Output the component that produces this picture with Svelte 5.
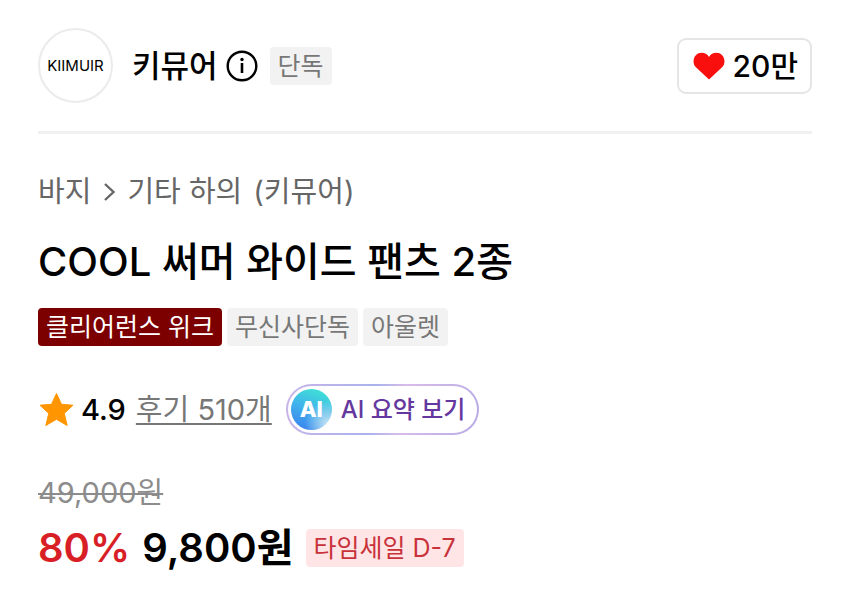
<script>
  const brand = { name: '키뮤어', logo: 'KIIMUIR', likes: '20만' };
  const tags = [
    { label: '클리어런스 위크', kind: 'clearance' },
    { label: '무신사단독', kind: 'plain' },
    { label: '아울렛', kind: 'plain' }
  ];
</script>

<main class="product">
  <header class="brand">
    <a class="logo" href="#brand">{brand.logo}</a>
    <a class="name" href="#brand">{brand.name}</a>
    <button class="info" type="button" aria-label="브랜드 정보">
      <svg width="32" height="32" viewBox="0 0 32 32" fill="none" stroke="#000">
        <circle cx="16" cy="16" r="14.300" stroke-width="2.4" />
        <path d="M16 13v10" stroke-width="2.6" />
        <circle cx="16" cy="9.500" r="1.700" fill="#000" stroke="none" />
      </svg>
    </button>
    <span class="tag plain">단독</span>
    <button class="like" type="button">
      <svg width="32" height="28" viewBox="0 0 32 28" fill="#fa0f0f" aria-hidden="true">
        <path d="M16 27.5 3.2 15.6C.9 13.4.4 11 .6 8.4 1 4 4.300.8 8.500.8c3.200 0 5.900 1.500 7.500 4.100C17.600 2.300 20.300.8 23.500.8c4.200 0 7.500 3.200 7.900 7.600.2 2.600-.3 5-2.600 7.200Z" />
      </svg>
      <span>{brand.likes}</span>
    </button>
  </header>

  <nav class="crumbs" aria-label="카테고리">
    <a href="#pants">바지</a>
    <svg width="14" height="20" viewBox="0 0 14 20" fill="none" stroke="#666" stroke-width="2.4" aria-hidden="true">
      <path d="m3 2 8.500 8L3 18" />
    </svg>
    <a href="#etc">기타 하의</a>
    <a href="#brand">({brand.name})</a>
  </nav>

  <h1>COOL 써머 와이드 팬츠 2종</h1>

  <div class="tags">
    {#each tags as tag}
      <span class="tag {tag.kind}">{tag.label}</span>
    {/each}
  </div>

  <div class="reviews">
    <svg width="36" height="36" viewBox="0 0 36 36" fill="#ff9500" aria-hidden="true">
      <path stroke="#ff9500" stroke-width="1" stroke-linejoin="round" d="m18.500 1.500 5 10.800 11.500.9-8.800 8.200 3 12.100-10.700-6.200-10.700 6.200 3-12.100L2 13.200l11.500-.9Z" />
    </svg>
    <span class="score">4.9</span>
    <a class="count" href="#reviews">후기 510개</a>
    <button class="ai" type="button">
      <span class="orb" aria-hidden="true">AI</span>
      <span>AI 요약 보기</span>
    </button>
  </div>

  <div class="price">
    <del>49,000원</del>
    <div class="sale">
      <strong class="rate">80%</strong>
      <strong>9,800원</strong>
      <span class="tag time">타임세일 D-7</span>
    </div>
  </div>
</main>

<style>
  :global(body) {
    margin: 0;
    background: #fff;
  }
  .product {
    padding: 28px 38px;
    color: #000;
    font-family: Inter, 'Noto Sans CJK KR', sans-serif;
  }
  a {
    color: inherit;
    text-decoration: none;
  }
  button {
    padding: 0;
    border: 0;
    background: none;
    color: inherit;
    font: inherit;
    cursor: pointer;
  }
  svg {
    display: block;
    flex: none;
  }
  .brand {
    display: flex;
    align-items: center;
    padding-bottom: 28px;
    border-bottom: 3px solid #f0f0f0;
  }
  .logo {
    box-sizing: border-box;
    width: 75px;
    height: 75px;
    border: 2px solid #ebebeb;
    border-radius: 50%;
    text-align: center;
    font-size: 15px;
    line-height: 72px;
  }
  .name {
    margin: 0 8px 0 19px;
    font-size: 31px;
    font-weight: 500;
    line-height: 40px;
  }
  .info {
    margin-right: 12px;
  }
  .like {
    display: flex;
    align-items: center;
    gap: 8px;
    margin-left: auto;
    padding: 6px 12px 6px 14px;
    border: 2px solid #e5e5e5;
    border-radius: 9px;
    font-size: 30px;
    font-weight: 500;
    line-height: 40px;
  }
  .tag {
    padding: 0 8px;
    border-radius: 4px;
    font-size: 25px;
    line-height: 38px;
    white-space: nowrap;
  }
  .plain {
    background: #f2f2f2;
    color: #777;
  }
  .clearance {
    background: #7d0000;
    color: #fff;
  }
  .time {
    margin-left: 12px;
    background: #ffe5e5;
    color: #c8323a;
  }
  .crumbs {
    display: flex;
    align-items: center;
    gap: 11px;
    margin-top: 38px;
    color: #666;
    font-size: 29px;
    line-height: 40px;
  }
  h1 {
    margin: 22px 0 18px;
    font-size: 40px;
    font-weight: 500;
    line-height: 56px;
  }
  .tags {
    display: flex;
    flex-wrap: wrap;
    gap: 5px;
  }
  .reviews {
    display: flex;
    align-items: center;
    margin-top: 38px;
    font-size: 29px;
    line-height: 40px;
  }
  .score {
    margin: 0 10px 0 7px;
    font-weight: 500;
  }
  .count {
    color: #777;
    text-decoration: underline;
    text-decoration-thickness: 2px;
    text-underline-offset: 3px;
  }
  .ai {
    display: flex;
    align-items: center;
    gap: 9px;
    margin-left: 14px;
    padding: 3px 12px 3px 3px;
    border: 2px solid transparent;
    border-radius: 26px;
    background:
      linear-gradient(#fff, #fff) padding-box,
      linear-gradient(100deg, #c9b5e8, #a9b2ec 45%, #d8bce8 60%, #b9abe6) border-box;
    color: #6538a0;
    font-size: 24px;
    font-weight: 500;
  }
  .orb {
    width: 41px;
    height: 41px;
    border-radius: 50%;
    background:
      radial-gradient(circle at 90% 85%, #c4e4f4, transparent 45%),
      linear-gradient(200deg, #3fdbd8 15%, #41b2ec 50%, #3b86ee 90%);
    color: #fff;
    font-size: 22px;
    font-weight: 800;
    line-height: 41px;
  }
  .price {
    margin-top: 38px;
  }
  del {
    display: block;
    color: #8c8c8c;
    font-size: 29px;
    line-height: 40px;
    text-decoration-thickness: 2px;
  }
  .sale {
    display: flex;
    align-items: center;
    margin-top: 7px;
    font-size: 40px;
    line-height: 56px;
  }
  strong {
    font-weight: 600;
  }
  .rate {
    margin-right: 12px;
    color: #d91f26;
  }
</style>
